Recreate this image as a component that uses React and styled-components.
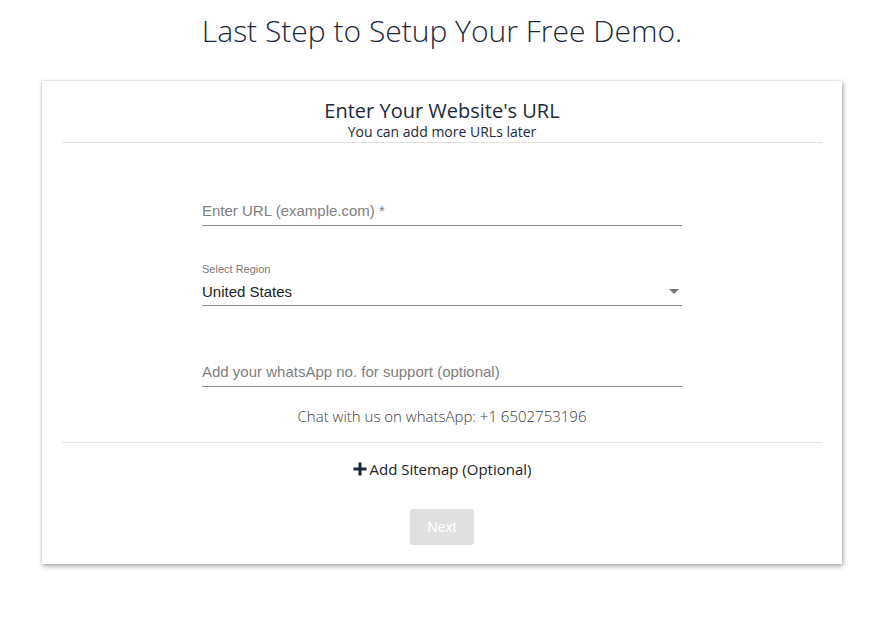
import React from 'react';
import styled, { createGlobalStyle } from 'styled-components';

const GlobalStyle = createGlobalStyle`
  body {
    margin: 0;
    background: #fff;
    font-family: "Open Sans", "Liberation Sans", sans-serif;
  }
`;

const Page = styled.div`
  width: calc(100% - 7px);
  display: flex;
  flex-direction: column;
  align-items: center;
  padding-top: 12px;
  padding-bottom: 20px;
`;

const Title = styled.h1`
  margin: 0;
  font-family: "Open Sans", sans-serif;
  font-weight: 300;
  font-size: 30px;
  line-height: 38px;
  color: #1d2939;
`;

const Card = styled.div`
  margin-top: 31px;
  width: 800px;
  box-sizing: border-box;
  background: #fff;
  padding: 0 20px 19px;
  box-shadow: 1px 2px 5px rgba(0, 0, 0, 0.35), 0 0 2px rgba(0, 0, 0, 0.12);
  display: flex;
  flex-direction: column;
  align-items: center;
`;

const Header = styled.div`
  width: 100%;
  padding-top: 19px;
  padding-bottom: 2px;
  border-bottom: 1px solid #e2e2e2;
  text-align: center;
`;

const Heading = styled.h2`
  margin: 0;
  font-weight: 400;
  font-size: 20px;
  line-height: 22px;
  color: #1d2939;
`;

const Sub = styled.div`
  margin-top: 2px;
  font-size: 14px;
  line-height: 16px;
  color: #1d2939;
`;

const Form = styled.div`
  width: 480px;
  padding-top: 34px;
  display: flex;
  flex-direction: column;
  gap: 31px;
`;

const Field = styled.div`
  position: relative;
  height: ${p => (p.$tall ? 49 : 48)}px;
  display: flex;
  flex-direction: column;
  justify-content: flex-end;
  border-bottom: 1px solid #8a8a8a;
`;

const Label = styled.label`
  margin-bottom: -1px;
  font-family: "Liberation Sans", Arial, sans-serif;
  font-size: 11px;
  line-height: 13px;
  color: #777;
`;

const Input = styled.input`
  height: 30px;
  padding: 0;
  border: none;
  outline: none;
  background: transparent;
  font-family: "Liberation Sans", Arial, sans-serif;
  font-size: 15px;
  color: #222;

  &::placeholder {
    color: #808080;
  }
`;

const SelectValue = styled.div`
  box-sizing: border-box;
  height: 30px;
  padding-top: 2px;
  display: flex;
  align-items: center;
  justify-content: space-between;
  font-family: "Liberation Sans", Arial, sans-serif;
  font-size: 15px;
  color: #222;
`;

const Arrow = styled.span`
  width: 0;
  height: 0;
  margin-right: 3px;
  border-left: 5px solid transparent;
  border-right: 5px solid transparent;
  border-top: 5px solid #757575;
`;

const Chat = styled.div`
  margin-top: 19px;
  padding-bottom: 16px;
  width: 100%;
  border-bottom: 1px solid #e2e2e2;
  text-align: center;
  font-size: 15px;
  font-weight: 300;
  line-height: 20px;
  color: #3c3c3c;
`;

const AddSitemap = styled.button`
  margin-top: 16px;
  border: none;
  background: none;
  padding: 0;
  display: flex;
  align-items: center;
  gap: 3px;
  font-family: "Open Sans", sans-serif;
  font-size: 15px;
  line-height: 20px;
  color: #222;
  cursor: pointer;
`;

const NextButton = styled.button`
  margin-top: 30px;
  width: 64px;
  height: 36px;
  border: none;
  border-radius: 3px;
  background: #e0e0e0;
  color: #fff;
  font-family: "Liberation Sans", Arial, sans-serif;
  font-size: 14px;
`;

const Plus = () => (
  <svg width="14" height="14" viewBox="0 0 14 14">
    <rect x="5.5" y="0.5" width="3" height="13" fill="#1b2638" />
    <rect x="0.5" y="5.5" width="13" height="3" fill="#1b2638" />
  </svg>
);

export default function App() {
  return (
    <>
      <GlobalStyle />
      <Page>
        <Title>Last Step to Setup Your Free Demo.</Title>
        <Card>
          <Header>
            <Heading>Enter Your Website's URL</Heading>
            <Sub>You can add more URLs later</Sub>
          </Header>
          <Form>
            <Field>
              <Input placeholder="Enter URL (example.com) *" />
            </Field>
            <Field>
              <Label>Select Region</Label>
              <SelectValue>
                United States
                <Arrow />
              </SelectValue>
            </Field>
            <Field $tall>
              <Input placeholder="Add your whatsApp no. for support (optional)" />
            </Field>
          </Form>
          <Chat>Chat with us on whatsApp: +1 6502753196</Chat>
          <AddSitemap>
            <Plus />
            Add Sitemap (Optional)
          </AddSitemap>
          <NextButton disabled>Next</NextButton>
        </Card>
      </Page>
    </>
  );
}
